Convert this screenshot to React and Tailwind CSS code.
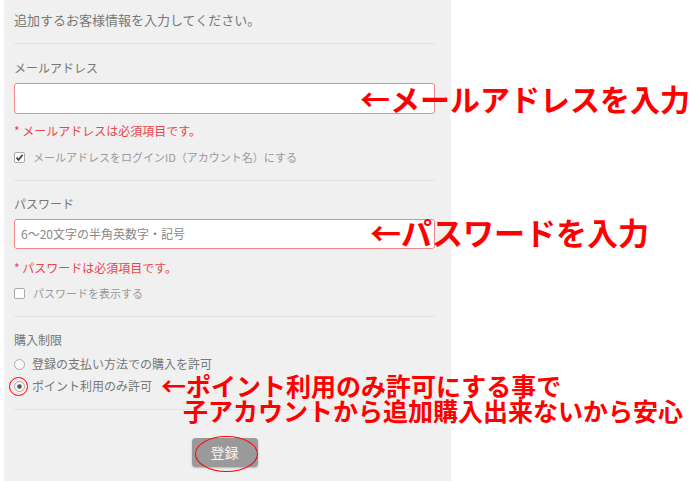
const Check = ({ checked }) => (
  <svg width="11" height="11" viewBox="0 0 11 11" className="shrink-0">
    <rect x="0.5" y="0.5" width="10" height="10" rx="1.5" fill="#fff" stroke="#aaa" />
    {checked && <path d="M2.5 5.6 L4.6 7.8 L8.6 2.8" fill="none" stroke="#444" strokeWidth="1.8" />}
  </svg>
);

const Radio = ({ checked }) => (
  <svg width="11" height="11" viewBox="0 0 11 11" className="shrink-0">
    <circle cx="5.5" cy="5.5" r="5" fill="#f8f8f8" stroke="#aaa" />
    {checked && <circle cx="5.5" cy="5.5" r="2.3" fill="#555" />}
  </svg>
);

const Divider = ({ className }) => <div className={`h-px bg-[#e2e2e2] ${className}`} />;

const Note = ({ className, children }) => (
  <div
    className={`absolute whitespace-nowrap font-bold text-[#ff0000] leading-none ${className}`}
    style={{ fontFamily: '"Noto Sans CJK JP", sans-serif' }}
  >
    {children}
  </div>
);

export default function App() {
  return (
    <div
      className="relative w-[700px] h-[482px] bg-white overflow-hidden"
      style={{ fontFamily: '"Noto Sans CJK JP", "Noto Sans", sans-serif' }}
    >
      <div className="ml-[4px] w-[447px] h-[481px] bg-[#f0f0f0] pl-[10px] pr-[16px] pt-[10px] flex flex-col">
        <p className="text-[13px] leading-[20px] text-[#777]">追加するお客様情報を入力してください。</p>
        <Divider className="mt-[13px]" />

        <p className="mt-[14px] text-[12px] leading-[20px] text-[#777]">メールアドレス</p>
        <div className="mt-[5px] h-[31px] bg-white border border-[#f0888c] rounded-[3px]" />
        <p className="mt-[8px] text-[12px] leading-[18px] text-[#e8464c]">* メールアドレスは必須項目です。</p>
        <label className="mt-[8px] flex items-center gap-[8px] text-[11px] leading-[18px] text-[#999]">
          <Check checked />
          メールアドレスをログインID（アカウント名）にする
        </label>
        <Divider className="mt-[14px]" />

        <p className="mt-[13px] text-[12px] leading-[20px] text-[#777]">パスワード</p>
        <div className="mt-[5px] h-[30px] bg-white border border-[#f0888c] rounded-[3px] flex items-center px-[6px] text-[12px] text-[#888]">
          6～20文字の半角英数字・記号
        </div>
        <p className="mt-[10px] text-[12px] leading-[18px] text-[#e8464c]">* パスワードは必須項目です。</p>
        <label className="mt-[7px] flex items-center gap-[8px] text-[11px] leading-[18px] text-[#999]">
          <Check />
          パスワードを表示する
        </label>
        <Divider className="mt-[14px]" />

        <p className="mt-[13px] text-[12px] leading-[20px] text-[#777]">購入制限</p>
        <label className="mt-[4px] flex items-center gap-[7px] text-[12px] leading-[20px] text-[#777]">
          <Radio />
          登録の支払い方法での購入を許可
        </label>
        <label className="mt-[2px] flex items-center gap-[7px] text-[12px] leading-[20px] text-[#777]">
          <Radio checked />
          ポイント利用のみ許可
        </label>
        <Divider className="mt-[13px]" />

        <div className="mt-[28px] flex justify-center">
          <button className="w-[66px] h-[29px] rounded-[4px] bg-[#9a9a9a] text-[14px] text-[#f4f4f4] shadow-[0_1px_2px_rgba(0,0,0,0.25)]">
            登録
          </button>
        </div>
      </div>

      <div className="absolute left-[9px] top-[377px] w-[19px] h-[19px] rounded-full border-[1.5px] border-[#ff0000]" />
      <div className="absolute left-[195px] top-[436px] w-[63px] h-[36px] rounded-[50%] border-[1.5px] border-[#ff0000]" />

      <Note className="left-[360px] top-[83px] text-[30px]">←メールアドレスを入力</Note>
      <Note className="left-[370px] top-[216px] text-[31px]">←パスワードを入力</Note>
      <Note className="left-[161px] top-[373px] text-[25px] leading-[30px]">
        <div>←ポイント利用のみ許可にする事で</div>
        <div className="pl-[22px]">子アカウントから追加購入出来ないから安心</div>
      </Note>
    </div>
  );
}
